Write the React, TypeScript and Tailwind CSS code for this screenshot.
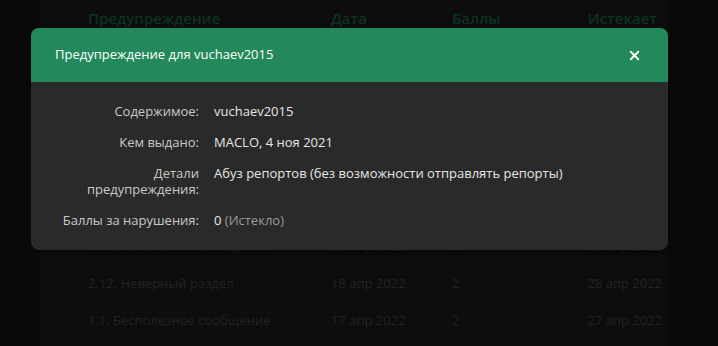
import { X } from "lucide-react";

type Row = {
  reason: string;
  date: string;
  points: string;
  expires: string;
};

const rows: Row[] = [
  { reason: "2.4. Флуд", date: "2 май 2022", points: "1", expires: "12 май 2022" },
  { reason: "2.12. Неверный раздел", date: "29 апр 2022", points: "2", expires: "9 май 2022" },
  { reason: "1.1. Бесполезное сообщение", date: "27 апр 2022", points: "2", expires: "7 май 2022" },
  { reason: "2.4. Флуд", date: "25 апр 2022", points: "1", expires: "5 май 2022" },
  { reason: "2.12. Неверный раздел", date: "22 апр 2022", points: "2", expires: "2 май 2022" },
  { reason: "1.1. Бесполезное сообщение", date: "20 апр 2022", points: "2", expires: "30 апр 2022" },
  { reason: "2.12. Неверный раздел", date: "18 апр 2022", points: "2", expires: "28 апр 2022" },
  { reason: "1.1. Бесполезное сообщение", date: "17 апр 2022", points: "2", expires: "27 апр 2022" },
];

const details = [
  { label: "Содержимое:", value: "vuchaev2015" },
  { label: "Кем выдано:", value: "MACLO, 4 ноя 2021" },
  {
    label: "Детали предупреждения:",
    value: "Абуз репортов (без возможности отправлять репорты)",
  },
];

function WarningTable() {
  return (
    <div className="ml-[40px] mr-[50px] min-h-[346px] bg-[#0d0d0d] pl-[48px] pr-[6px]">
      <div className="grid h-[36px] grid-cols-[243px_121px_1fr_auto] items-center pr-[5px] text-[15px] font-semibold text-[#0c331f]">
        <div>Предупреждение</div>
        <div>Дата</div>
        <div>Баллы</div>
        <div className="text-right">Истекает</div>
      </div>
      <div className="pt-[7px]">
        {rows.map((row, index) => (
          <div
            className="grid h-[37px] grid-cols-[243px_121px_1fr_auto] items-center text-[13px] text-[#222222]"
            key={index}
          >
            <div>{row.reason}</div>
            <div>{row.date}</div>
            <div>{row.points}</div>
            <div className="text-right">{row.expires}</div>
          </div>
        ))}
      </div>
    </div>
  );
}

export default function App() {
  return (
    <div
      className="relative h-[346px] w-[718px] overflow-hidden bg-[#0a0a0a]"
      style={{ fontFamily: '"Open Sans", "Noto Sans", sans-serif' }}
    >
      <WarningTable />

      <div className="absolute left-[31px] top-[28px] w-[637px] overflow-hidden rounded-[8px] bg-[#2a2a2a] shadow-[0_2px_6px_rgba(0,0,0,0.6)]">
        <div className="flex h-[54px] items-center justify-between bg-[#23895c] pl-[24px] pr-[26px]">
          <span className="text-[13px] text-white">
            Предупреждение для vuchaev2015
          </span>
          <X className="h-[15px] w-[15px] text-white" strokeWidth={3} />
        </div>

        <div className="flex flex-col gap-[15px] pb-[22px] pl-[28px] pt-[21px] text-[13px] leading-[16px]">
          {details.map((item) => (
            <div className="grid grid-cols-[140px_1fr] gap-x-[15px]" key={item.label}>
              <div className="text-right text-[#c9c9c9]">{item.label}</div>
              <div className="text-[#e6e6e6]">{item.value}</div>
            </div>
          ))}
          <div className="grid grid-cols-[140px_1fr] gap-x-[15px]">
            <div className="text-right text-[#c9c9c9]">Баллы за нарушения:</div>
            <div className="text-[#e6e6e6]">
              0 <span className="text-[#9a9a9a]">(Истекло)</span>
            </div>
          </div>
        </div>
      </div>
    </div>
  );
}
